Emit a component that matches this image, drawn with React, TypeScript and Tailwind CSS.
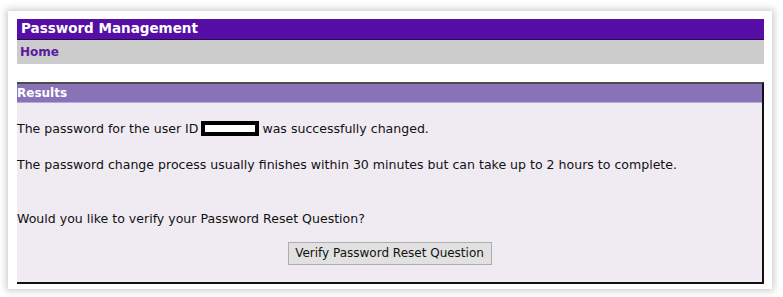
export default function App() {
  return (
    <div className="w-[783px] h-[297px] bg-white pt-[11px] pl-[8px] font-['DejaVu_Sans',Verdana,sans-serif]">
      <div className="w-[764px] h-[278px] bg-white shadow-[0_0_7px_2px_rgba(0,0,0,0.2)] pt-[8px] pl-[9px] pr-[8px]">
        {/* title bar */}
        <div className="h-[21px] bg-[#560ea6] border-b border-[#2b0b4f] flex items-center px-[4px]">
          <span className="text-[13.5px] font-bold text-white leading-none">Password Management</span>
        </div>

        {/* nav */}
        <div className="h-[24px] bg-[#cccccc] flex items-center px-[3px]">
          <a className="text-[12px] font-bold text-[#5a1b9f] leading-none">Home</a>
        </div>

        <div className="h-[18px]" />

        {/* results panel */}
        <div className="border-t-2 border-t-[#4a4a4a] border-r-2 border-r-[#111] border-b-2 border-b-[#111]">
          <div className="h-[19px] bg-[#8872b8] border-b border-[#b7a8d8] flex items-center">
            <span className="text-[12px] font-bold text-white leading-none">Results</span>
          </div>
          <div className="bg-[#f0ebf2] pt-[18px] pb-[17px] text-[12.55px] leading-[15px] text-[#111]">
            <p className="flex items-center">
              The password for the user ID
              <span className="inline-block w-[58px] h-[15px] bg-white border-[4px] border-black mx-[3px]" />
              was successfully changed.
            </p>
            <p className="mt-[21px]">
              The password change process usually finishes within 30 minutes but can take up to 2 hours to complete.
            </p>
            <p className="mt-[39px]">Would you like to verify your Password Reset Question?</p>
            <div className="mt-[16px] flex justify-center">
              <button className="h-[23px] w-[204px] bg-[#e1e1e1] border border-[#adadad] text-[12px] text-[#111]">
                Verify Password Reset Question
              </button>
            </div>
          </div>
        </div>
      </div>
    </div>
  );
}
